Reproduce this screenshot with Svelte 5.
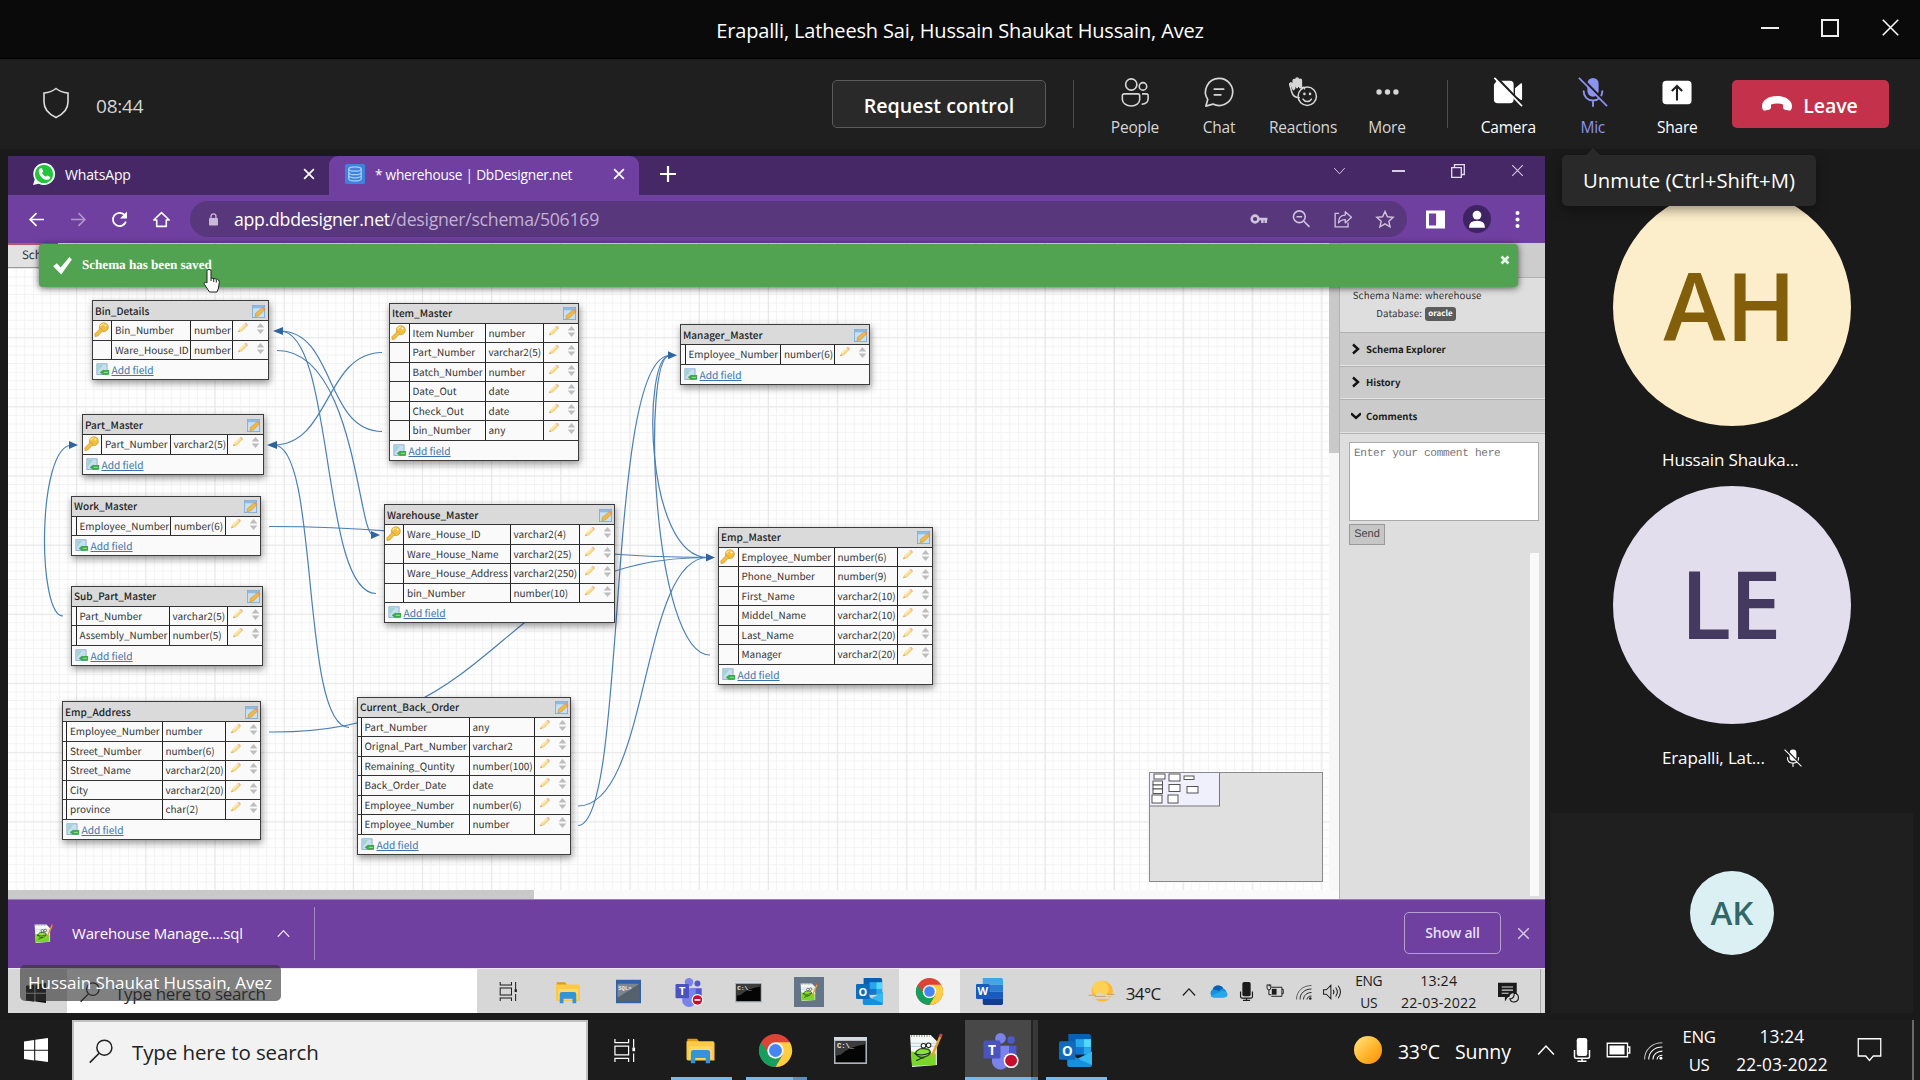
<script>
  const CX = 8;
  const CY = 243;

  const tables = [
    { name: 'Bin_Details', x: 92, y: 300, cols: [20, 79, 41.5, 36], rows: [['Bin_Number', 'number', 1], ['Ware_House_ID', 'number']] },
    { name: 'Part_Master', x: 82, y: 414, cols: [20, 68.5, 57.5, 35.5], rows: [['Part_Number', 'varchar2(5)', 1]] },
    { name: 'Work_Master', x: 71, y: 495.5, cols: [5.5, 94.5, 54.5, 35], rows: [['Employee_Number', 'number(6)']] },
    { name: 'Sub_Part_Master', x: 71, y: 585.5, cols: [5.5, 93, 58, 35.5], rows: [['Part_Number', 'varchar2(5)'], ['Assembly_Number', 'number(5)']] },
    { name: 'Emp_Address', x: 62, y: 701, cols: [5, 95.5, 63, 35.5], rows: [['Employee_Number', 'number'], ['Street_Number', 'number(6)'], ['Street_Name', 'varchar2(20)'], ['City', 'varchar2(20)'], ['province', 'char(2)']] },
    { name: 'Item_Master', x: 389, y: 302.5, cols: [20.5, 76, 58, 35.5], rows: [['Item Number', 'number', 1], ['Part_Number', 'varchar2(5)'], ['Batch_Number', 'number'], ['Date_Out', 'date'], ['Check_Out', 'date'], ['bin_Number', 'any']] },
    { name: 'Warehouse_Master', x: 384, y: 504, cols: [20, 106.5, 69, 35.5], rows: [['Ware_House_ID', 'varchar2(4)', 1], ['Ware_House_Name', 'varchar2(25)'], ['Ware_House_Address', 'varchar2(250)'], ['bin_Number', 'number(10)']] },
    { name: 'Manager_Master', x: 680, y: 324, cols: [5.5, 95.5, 54, 35], rows: [['Employee_Number', 'number(6)']] },
    { name: 'Emp_Master', x: 718, y: 526.5, cols: [20.5, 96, 63, 35.5], rows: [['Employee_Number', 'number(6)', 1], ['Phone_Number', 'number(9)'], ['First_Name', 'varchar2(10)'], ['Middel_Name', 'varchar2(10)'], ['Last_Name', 'varchar2(20)'], ['Manager', 'varchar2(20)']] },
    { name: 'Current_Back_Order', x: 357, y: 696.5, cols: [4.5, 108, 65, 36.5], rows: [['Part_Number', 'any'], ['Orignal_Part_Number', 'varchar2'], ['Remaining_Quntity', 'number(100)'], ['Back_Order_Date', 'date'], ['Employee_Number', 'number(6)'], ['Employee_Number', 'number']] }
  ];

  const links = [
    'M280 331C335 331 320 593 376 593.5',
    'M280 331C335 331 325 431 382 431.5',
    'M277 350.5C355 350 358 535 373 535',
    'M274 445C330 445 325 353 382 352.5',
    'M274 445C320 445 300 727 349 727.5',
    'M72 445C37 445 37 616 63 616',
    'M269 526.5C450 526 530 557 708 557.5',
    'M269 732C510 734 490 557 708 557.5',
    'M578 825.5C628 825 605 355 670 355.5',
    'M670 355.5C642 355 644 557 708 557.5',
    'M670 355.5C641 355 652 655 710 655',
    'M578 806C650 806 640 557 708 557.5'
  ];

  const arrows = [
    'M273 331l10-4v8z', 'M267 445l10-4v8z', 'M78 445l-9-4v8z',
    'M380 535l-9-4v8z', 'M677 355.3l-9-4v8z', 'M715 557.5l-9-4v8z'
  ];

  const mini = [
    [5, 2, 11, 5], [20, 2, 11, 7], [35, 4, 10, 3.5], [4, 9, 9.5, 4], [4, 13, 9.5, 4],
    [4, 17, 9.5, 4.5], [20, 12.5, 11, 7], [38, 14.5, 11, 6.5], [3, 23, 10, 8], [19, 23, 10, 8]
  ];

  const meetingTools = ['People', 'Chat', 'Reactions', 'More'];
  const deviceTools = ['Camera', 'Mic', 'Share'];
  const innerApps = ['taskview', 'explorer', 'sql', 'teams', 'cmd', 'npp', 'outlook', 'chrome', 'word'];
  const apps = ['taskview', 'explorer', 'chrome', 'cmd', 'npp', 'teams', 'outlook'];
</script>

{#snippet icon(name, cls = '')}
  <svg class="ic {name} {cls}" viewBox="0 0 32 32" fill="none">
    {#if name === 'People'}
      <g stroke="currentColor" stroke-width="1.7">
        <circle cx="12" cy="8" r="6" /><circle cx="24.5" cy="10" r="4" />
        <path d="M4.5 18h14.5a2 2 0 0 1 2 2v4c0 4-4 7-9 7s-9.500-3-9.500-7v-4a2 2 0 0 1 2-2zM23.500 18h4.500a2 2 0 0 1 2 2v3c0 4-3 6-7 6" />
      </g>
    {:else if name === 'Chat'}
      <path d="M16 1.500a14.500 14.500 0 1 1-6.500 27.400L2 31l2-7A14.500 14.500 0 0 1 16 1.500zM11 13h10M11 19h7" stroke="currentColor" stroke-width="1.8" stroke-linejoin="round" stroke-linecap="round" />
    {:else if name === 'Reactions'}
      <g stroke="currentColor" stroke-width="1.600" stroke-linecap="round" stroke-linejoin="round">
        <path d="M12 22c-4 0-7-2-8-6L1.800 8c-.3-1.600 1.800-2 2.300-.6L5.500 12V4c0-1.800 2.300-1.800 2.500 0l.4 6V2.500c0-1.800 2.600-1.800 2.600 0L11.300 10l.5-6.500c.2-1.700 2.500-1.500 2.500.2V13l1.200-1.500c1-1.300 2.700-.2 2.100 1.100" />
        <path d="M3 7l3 6M6.700 4v8M9.600 3v8M12.900 3.500V11" stroke-width="2.400" />
        <circle cx="20.500" cy="20.500" r="9.800" /><path d="M16 23.500c2 3.500 7 3.500 9 0" />
      </g>
      <circle cx="17.500" cy="18" r="1.400" fill="currentColor" /><circle cx="23.500" cy="18" r="1.400" fill="currentColor" />
    {:else if name === 'More'}
      <g fill="currentColor"><circle cx="6" cy="16" r="3.200" /><circle cx="16" cy="16" r="3.200" /><circle cx="26" cy="16" r="3.200" /></g>
    {:else if name === 'Camera'}
      <path d="M4 4h14a4 4 0 0 1 4 4v16a4 4 0 0 1-4 4H5a4 4 0 0 1-4-4V8zM23.500 12l6-5c.8-.6 1.500-.3 1.500.6v16c0 1-.7 1.300-1.500.7l-6-4z" fill="currentColor" />
      <path d="M3 0l29 30" stroke="#1f1f1f" stroke-width="3" /><path d="M1.500 1L31 31" stroke="currentColor" stroke-width="1.800" />
    {:else if name === 'Mic'}
      <rect x="10" y="1" width="12" height="20" rx="6" fill="currentColor" />
      <path d="M6 15c0 6 4 10 10 10s10-4 10-10M16 25v6" stroke="currentColor" stroke-width="2" stroke-linecap="round" />
      <path d="M3 0l29 30" stroke="#1f1f1f" stroke-width="2.500" /><path d="M1 1l30 30" stroke="currentColor" stroke-width="1.800" />
    {:else if name === 'Share'}
      <rect x="0.500" y="4" width="31" height="25" rx="4" fill="currentColor" /><path d="M16 25V10M10.500 15L16 9.500l5.500 5.500" stroke="#1f1f1f" stroke-width="2.200" />
    {:else if name === 'taskview'}
      <path d="M2 0v5h19V0M2 32v-5h19v5M2 10h19v12H2zM28 0v12M28 20v12" stroke="currentColor" stroke-width="1.700" /><rect x="26.300" y="12" width="3.700" height="5" fill="currentColor" />
    {:else if name === 'explorer'}
      <path d="M1 3h11l3 4H1z" fill="#e09c0b" /><path d="M0 6h30a2 2 0 0 1 2 2v20H2a2 2 0 0 1-2-2z" fill="#fdc947" /><path d="M3 12h26v14H3z" fill="#ffd968" /><path d="M5 19q0-3 3-3h16q3 0 3 3v12h-5v-6H10v6H5z" fill="#3593d8" />
    {:else if name === 'chrome'}
      <circle cx="16" cy="16" r="16" fill="#db4437" /><path d="M2.100 8A16 16 0 0 0 16 32l7-12-7 1.500-7-3.500z" fill="#159f5c" /><path d="M29.900 8A16 16 0 0 1 16 32l7-12-1-8-6-4z" fill="#ffcd41" /><circle cx="16" cy="16" r="8" fill="#f4f4f4" /><circle cx="16" cy="16" r="6.200" fill="#4686f4" />
    {:else if name === 'cmd'}
      <path d="M0 3h32v26H0z" fill="#aeb4bb" /><path d="M0 3h32v3H0z" fill="#d4dae2" /><path d="M1.500 7h29v20.500h-29z" fill="#050505" /><path d="M1.500 7h29v3q-15 2-24 10l-5 1z" fill="#3c3c3c" /><text class="term" x="2.800" y="14">C:\_</text>
    {:else if name === 'npp'}
      <path d="M1 1h20l6 6v23L3 32z" fill="#f4f7f2" /><path d="M2 9h24M2 12h24" stroke="#b8d0e8" /><path d="M2 17l24 2v11L3 31z" fill="#7bd62b" /><path d="M8 21c-4-3 1-7 6-7l5 1c3 2 1 6-3 7s-5 1-8-1z" fill="#8be03c" stroke="#244f12" stroke-width="1.300" /><circle cx="14" cy="11.500" r="2.200" fill="#fff" stroke="#222" /><circle cx="19" cy="11" r="2.200" fill="#fff" stroke="#222" /><path d="M5 19q8 3 16-1M7 26q5-3 8-3" stroke="#222" /><path d="M31 1l-9 21" stroke="#e8a02b" stroke-width="2.400" /><path d="M30.200 3l1.300-3" stroke="#c44" stroke-width="2.600" /><path d="M2 2h18" stroke="#777" stroke-width="1.500" stroke-dasharray="1 1.500" />
    {:else if name === 'teams'}
      <circle cx="16" cy="5" r="5" fill="#7b83eb" /><circle cx="26" cy="6.500" r="3.500" fill="#5059c9" /><path d="M19 12h12v9a6 6 0 0 1-9 5z" fill="#5059c9" /><path d="M8 12h16v12a8 8 0 0 1-16 4z" fill="#7b83eb" /><rect y="7" width="16" height="17" rx="1.500" fill="#4b53bc" /><text class="letter" x="8" y="20.500">T</text>
      <circle cx="26" cy="26" r="7" fill="#fff" /><circle cx="26" cy="26" r="5.600" fill="#c50f2f" />
      {#if cls === 'small'}<path d="M22.500 26h7" stroke="#fff" stroke-width="2" />{/if}
    {:else if name === 'outlook'}
      <path d="M9 0h20a2 2 0 0 1 2 2v17H9z" fill="#0a5fb0" /><path d="M16 5h8v8h-8z" fill="#28a8ea" /><path d="M24 5h7v8h-7z" fill="#50d9ff" /><path d="M16 13h8v7h-8z" fill="#0f78d4" /><path d="M24 13h7v7h-7z" fill="#28a8ea" /><path d="M8 17l12 8 12-8v13a2 2 0 0 1-2 2H10a2 2 0 0 1-2-2z" fill="#1490df" /><path d="M32 17v13L18 24z" fill="#35b8f1" /><rect y="7" width="16" height="18" rx="1.500" fill="#0f6cbd" /><text class="letter" x="8" y="21">O</text>
    {:else if name === 'word'}
      <path d="M8 0h22a2 2 0 0 1 2 2v6H8z" fill="#41a5ee" /><path d="M8 8h24v8H8z" fill="#2b7cd3" /><path d="M8 16h24v8H8z" fill="#185abd" /><path d="M8 24h24v6a2 2 0 0 1-2 2H10a2 2 0 0 1-2-2z" fill="#103f91" /><rect y="7" width="16" height="18" rx="1.500" fill="#185abd" /><text class="letter" x="8" y="20.500">W</text>
    {:else if name === 'sql'}
      <rect x="0" y="1" width="32" height="30" fill="#2f62a8" /><rect x="2" y="6" width="28" height="23" fill="#56616e" /><path d="M2 6h28L2 24z" fill="#7c8590" /><text class="term" x="3" y="14">SQL&gt;</text>
    {:else if name === 'winlogo'}
      <path d="M0 4.500l13.500-2v13H0zM15 2.300L32 0v15.500H15zM0 17h13.500v13L0 28zM15 17h17v15l-17-2.300z" fill="currentColor" />
    {:else if name === 'search'}
      <circle cx="20.500" cy="11.500" r="10" stroke="currentColor" stroke-width="2" /><path d="M13.500 19L1 31.500" stroke="currentColor" stroke-width="2.200" />
    {:else if name === 'wifi'}
      <g stroke="currentColor" stroke-width="1.800"><path d="M1 31C1 14 14 3 31 3" opacity=".7" /><path d="M8 31c0-13 10-21 23-21M15 31c0-8 7-14 16-14M22 31c0-4 4-7 9-7" /></g><circle cx="28.500" cy="29" r="2.500" fill="currentColor" />
    {:else if name === 'volume'}
      <path d="M1 12h5l8-8v24l-8-8H1zM18 12q3 4 0 8M22.500 8q6 8 0 16M27 5q8 11 0 22" stroke="currentColor" stroke-width="1.800" />
    {:else if name === 'smic'}
      <rect x="9" y="0" width="14" height="24" rx="3" fill="currentColor" /><path d="M6 16v9q0 2 2 2h16q2 0 2-2v-9M16 27v4M10 31h12" stroke="currentColor" stroke-width="2" />
    {:else if name === 'battery'}
      <path d="M1 7h27v18H1zM28 12h3v8h-3" stroke="currentColor" stroke-width="1.800" /><path d="M4 10h20v12H4z" fill="currentColor" />
    {:else if name === 'plug'}
      <path d="M9 8h20v17H9M29 12h2.500v8H29M1 3v6q0 4 3.500 4T8 9V3M3 2v4M6 2v4M4.500 13v9H9" stroke="currentColor" stroke-width="1.800" /><path d="M10 11h9v11h-9z" fill="currentColor" />
    {:else if name === 'onedrive'}
      <path d="M8 26a8 8 0 0 1-1-14A10 10 0 0 1 25 11a8 8 0 0 1 0 15z" fill="#1490df" /><path d="M7 12A10 10 0 0 1 25 11q-5 0-7 4z" fill="#0a5fb8" /><path d="M3 24l20-9q9 0 9 6 0 5-6 5H8z" fill="#28a8ea" />
    {:else if name === 'chev-up'}
      <path d="M2 24L16 9l14 15" stroke="currentColor" stroke-width="2.800" />
    {:else if name === 'chev-down'}
      <path d="M3 10l13 14 13-14" stroke="currentColor" stroke-width="2.400" />
    {:else if name === 'close'}
      <path class="x" d="M3 3l26 26M29 3L3 29" stroke="currentColor" stroke-width="2.600" />
    {:else if name === 'note'}
      <path d="M1 1h30v23H21l-5 6-5-6H1z" stroke="currentColor" stroke-width="1.700" />
    {:else if name === 'note-fill'}
      <path d="M0 1h30v23H16l-5 7v-7H0z" fill="currentColor" /><path d="M6 8h18M6 13h18M6 18h11" stroke="#d7d7d7" stroke-width="1.800" /><circle cx="25" cy="25" r="7" fill="#d7d7d7" /><path d="M26 18a7 7 0 1 1-7 9q7 0 7-9z" stroke="currentColor" stroke-width="1.800" />
    {:else if name === 'back'}
      <path d="M30 16H4M16 4L4 16l12 12" stroke="currentColor" stroke-width="3.200" />
    {:else if name === 'forward'}
      <path d="M2 16h26M16 4l12 12-12 12" stroke="currentColor" stroke-width="3" />
    {:else if name === 'reload'}
      <path d="M28 20A12.500 12.500 0 1 1 25 7l4 5" stroke="currentColor" stroke-width="3.400" /><path d="M30 1v13H17z" fill="currentColor" />
    {:else if name === 'home'}
      <path d="M1.500 17L16 3l14.500 14H25v12H7V17z" stroke="currentColor" stroke-width="3" stroke-linejoin="round" />
    {:else if name === 'lock'}
      <rect x="5" y="12" width="22" height="19" rx="2" fill="currentColor" /><path d="M10 13V8a6 6 0 0 1 12 0v5" stroke="currentColor" stroke-width="3.200" />
    {:else if name === 'key'}
      <circle cx="9" cy="16" r="6" stroke="currentColor" stroke-width="4.500" /><path d="M15 16h16M22 16v7M28 16v7" stroke="currentColor" stroke-width="4.500" />
    {:else if name === 'zoom'}
      <circle cx="13" cy="12" r="10.500" stroke="currentColor" stroke-width="2.800" /><path d="M21 20l10 10M8 12h10" stroke="currentColor" stroke-width="3" />
    {:else if name === 'share'}
      <path d="M9 6H2v24h23v-8" stroke="currentColor" stroke-width="2.400" /><path d="M8 23c0-9 5-14 12-14V3l11 10-11 10v-6q-8 0-12 6z" stroke="currentColor" stroke-width="2.300" stroke-linejoin="round" />
    {:else if name === 'star'}
      <path d="M16 2.500l4.300 9.500 10.200 1-7.700 6.800L25 30l-9-5.300L7 30l2.200-10.200L1.500 13l10.200-1z" stroke="currentColor" stroke-width="2.500" />
    {:else if name === 'panel'}
      <path d="M0 1h32v30H0zM5 6v20h12V6z" fill="currentColor" fill-rule="evenodd" />
    {:else if name === 'user'}
      <circle cx="16" cy="16" r="16" fill="#3f2463" /><circle cx="16" cy="11.500" r="5" fill="#fff" /><path d="M7 25q0-7 9-7t9 7v1H7z" fill="#fff" />
    {:else if name === 'dots'}
      <g fill="currentColor"><circle cx="16" cy="5" r="3.400" /><circle cx="16" cy="16" r="3.400" /><circle cx="16" cy="27" r="3.400" /></g>
    {:else if name === 'whatsapp'}
      <path d="M16 0a16 16 0 1 1-7.500 30L0 32l2.500-8A16 16 0 0 1 16 0z" fill="#f2fff5" /><circle cx="16" cy="16" r="13.300" fill="#25c43f" /><path d="M10 8l3-.5 2 5-2 2q2 4 5.500 5.500l2.500-2 4 2.500q0 4-4.500 4C14 24.500 7 16 8.500 10z" fill="#fff" />
    {:else if name === 'db'}
      <rect width="32" height="32" rx="3" fill="#3f82dc" /><path d="M6 8v15q0 4 10 4t10-4V8M6 13q0 4 10 4t10-4M6 18q0 4 10 4t10-4" stroke="#a7cdfa" stroke-width="2" /><ellipse cx="16" cy="8" rx="10" ry="3.500" stroke="#a7cdfa" stroke-width="2" />
    {:else if name === 'suncloud'}
      <circle cx="17" cy="15" r="13" fill="#ffb92e" /><circle cx="15" cy="12" r="10" fill="#ffd056" /><path d="M0 20h9q5-6 10-1h13v2H21q8 0 5 3.500H4q0-3.500 4-3.500H0z" fill="#ded3c2" /><path d="M0 20h9M23 19h9M8 21.500h13" stroke="#b98c5c" stroke-width=".8" />
    {:else if name === 'pencil'}
      <path d="M3 27l3-9L22 3l7 6-16 16z" fill="#f4d687" /><path d="M20 5l3-3q5 1 6 6l-3 3z" fill="#efb8a6" /><path d="M6 18L21 5l3 2L9 21z" fill="#fcebb3" /><path d="M3 27l2-5 3 3z" fill="#b49b7b" />
    {:else if name === 'sort'}
      <path d="M16 0l11 13H5zM16 32L5 19h22z" fill="#bdbdbd" />
    {:else if name === 'goldkey'}
      <circle cx="21" cy="11" r="9.500" fill="#f4bf3d" stroke="#c98d1d" stroke-width="1.300" /><path d="M14 13l5 5L8 30l-6 1v-6z" fill="#f4bf3d" stroke="#c98d1d" stroke-width="1.300" /><circle cx="24.500" cy="7.500" r="2" fill="#fff" /><path d="M14 9q2-5 7-5" stroke="#ffe999" stroke-width="2.500" />
    {:else if name === 'edit'}
      <rect x="1" y="1" width="30" height="30" fill="#c7e0f4" stroke="#7aa8d1" stroke-width="2" /><path d="M2 2h28v6H2z" fill="#8fbbe2" /><path d="M7 29l2-9L25 7l6 5-15 15z" fill="#f3b843" stroke="#b8802a" /><path d="M25 7l4-2 4 4-2 3z" fill="#e88f73" />
    {:else if name === 'add'}
      <rect x="1" y="2" width="25" height="26" fill="#c9def1" stroke="#7ba4ce" stroke-width="2" /><path d="M4 5h12L4 20z" fill="#9cd6cc" /><path d="M16 17h15v12H16zM8 23l9-7v14z" fill="#39ab48" /><path d="M18 23h10" stroke="#b4eabb" stroke-width="2" />
    {:else if name === 'check'}
      <path d="M1 18l6-5 6 7L27 3l4 4-17 24z" fill="#fff" />
    {:else if name === 'shield'}
      <path d="M16 1.500q5 4 12 4.500v9q0 10-12 15.500Q4 25 4 15V6q7-.5 12-4.500z" stroke="currentColor" stroke-width="1.600" />
    {/if}
  </svg>
{/snippet}

<div class="desktop">
  <header class="titlebar">
    <span class="title">Erapalli, Latheesh Sai, Hussain Shaukat Hussain, Avez</span>
    <div class="win"><i class="min"></i><i class="max"></i>{@render icon('close')}</div>
  </header>

  <div class="meetbar">
    {@render icon('shield')}
    <span class="timer">08:44</span>
    <button class="request">Request control</button>
    <i class="rule"></i>
    <nav class="tools">
      {#each meetingTools as t}<div class="tool">{@render icon(t)}<span>{t}</span></div>{/each}
    </nav>
    <i class="rule"></i>
    <nav class="tools bright">
      {#each deviceTools as t}<div class="tool" class:active={t === 'Mic'}>{@render icon(t)}<span>{t}</span></div>{/each}
    </nav>
    <button class="leave">
      <svg class="phone" viewBox="0 0 30 16"><path d="M15 0c8 0 15 4 15 10 0 3-1 5-3 4.600l-4-.8c-1.500-.3-2-1.500-2-3V8.500q-6-2-12 0v2.300c0 1.500-.5 2.700-2 3l-4 .8C1 15 0 13 0 10 0 4 7 0 15 0z" fill="#fff" /></svg>
      <span>Leave</span>
    </button>
  </div>

  <main class="stage">
    <section class="shared">
      <div class="tabs">
        <div class="tab">{@render icon('whatsapp')}<span>WhatsApp</span>{@render icon('close')}</div>
        <div class="tab on">{@render icon('db')}<span>* wherehouse | DbDesigner.net</span>{@render icon('close')}</div>
        <svg class="plus" viewBox="0 0 16 16"><path d="M8 0v16M0 8h16" stroke="#fff" stroke-width="2.200" /></svg>
        <div class="tabwin">
          {@render icon('chev-down')}<i class="min"></i>
          <svg class="restore" viewBox="0 0 14 14"><path d="M.7 3.700h9.600v9.600H.7zM3.500 3.500V.7h9.800v9.800h-2.800" fill="none" stroke="#e8e0f0" stroke-width="1.300" /></svg>
          {@render icon('close')}
        </div>
      </div>
      <div class="addr">
        <div class="navs">{@render icon('back')}{@render icon('forward')}{@render icon('reload')}{@render icon('home')}</div>
        <div class="url">
          {@render icon('lock')}<span class="host">app.dbdesigner.net<em>/designer/schema/506169</em></span>
          <div class="urlacts">{@render icon('key')}{@render icon('zoom')}{@render icon('share')}{@render icon('star')}</div>
        </div>
        <div class="ext">{@render icon('panel')}{@render icon('user')}{@render icon('dots')}</div>
      </div>

      <div class="page">
        <div class="work">
          <div class="canvas">
            <div class="apptab">Sch</div>
            <svg class="links" viewBox="8 243 1321 647" width="1321" height="647">
              <g fill="none" stroke="#4a7fb5" stroke-width="1.200">{#each links as d}<path {d} />{/each}</g>
              <g fill="#2f649e">{#each arrows as d}<path {d} />{/each}</g>
            </svg>
            {#each tables as t}
              <div class="table" style="left:{t.x - CX}px;top:{t.y - CY}px">
                <div class="thead"><span>{t.name}</span>{@render icon('edit')}</div>
                {#each t.rows as r}
                  <div class="row" style="grid-template-columns:{t.cols.map((c) => c + 'px').join(' ')}">
                    <span class="cell k">{#if r[2]}{@render icon('goldkey')}{/if}</span>
                    <span class="cell">{r[0]}</span>
                    <span class="cell">{r[1]}</span>
                    <span class="acts">{@render icon('pencil')}{@render icon('sort')}</span>
                  </div>
                {/each}
                <div class="tfoot">{@render icon('add')}<u>Add field</u></div>
              </div>
            {/each}
            <div class="minimap">
              <svg viewBox="0 0 174 110" width="174" height="110">
                <rect x=".5" y=".5" width="70" height="33.500" fill="#f0effc" stroke="#777" />
                {#each mini as [x, y, w, h]}<rect {x} {y} width={w} height={h} fill="#fff" stroke="#444" stroke-width=".9" />{/each}
              </svg>
            </div>
          </div>
          <div class="vscroll"><i></i></div>
          <div class="hscroll"><i></i></div>
        </div>
        <aside class="side">
          <div class="sidetop"></div>
          <div class="info">
            <div class="kv"><span>Schema Name:</span><b>wherehouse</b></div>
            <div class="kv"><span>Database:</span><b class="badge">oracle</b></div>
          </div>
          <div class="sec"><svg viewBox="0 0 10 12"><path d="M2 1.500L7 6l-5 4.500" /></svg>Schema Explorer</div>
          <div class="sec"><svg viewBox="0 0 10 12"><path d="M2 1.500L7 6l-5 4.500" /></svg>History</div>
          <div class="sec"><svg viewBox="0 0 10 12"><path d="M0 3.500L5 8l5-4.500" /></svg>Comments</div>
          <div class="comments">
            <div class="area">Enter your comment here</div>
            <div class="send">Send</div>
            <div class="track"></div>
          </div>
        </aside>
        <div class="toast">
          {@render icon('check')}<span>Schema has been saved</span>
          <svg class="x" viewBox="0 0 10 10"><path d="M1.500 1.500l7 7M8.500 1.500l-7 7" stroke="#e8f6e8" stroke-width="2.800" /></svg>
        </div>
        <svg class="hand" viewBox="0 0 18 25"><path d="M6 1.500c1.600 0 2 1 2 2V10l5 1c2 .4 3.500 1.200 3.300 3.200L15.500 20 14 24H6.500L1.500 16.500c-1-1.700.8-3 2.200-1.700L4 15V3.500c0-1 .5-2 2-2z" fill="#fff" stroke="#222" /><path d="M8 10v3M10.700 11v3M13.300 12v2.500" stroke="#222" /></svg>
      </div>

      <div class="downloads">
        {@render icon('npp')}<span>Warehouse Manage....sql</span>{@render icon('chev-up')}<i></i>
        <button class="showall">Show all</button>{@render icon('close')}
      </div>

      <div class="innerbar">
        <div class="istart">{@render icon('winlogo')}</div>
        <div class="isearch">{@render icon('search')}<span>Type here to search</span></div>
        <div class="iapps">{#each innerApps as a}<div class="iapp" class:lit={a === 'chrome'} class:tile={a === 'npp'}>{@render icon(a, 'small')}</div>{/each}</div>
        <div class="itray">
          {@render icon('suncloud')}<span class="temp">34°C</span>
          {@render icon('chev-up')}{@render icon('onedrive')}{@render icon('smic')}{@render icon('plug')}{@render icon('wifi')}{@render icon('volume')}
          <span class="two lang">ENG<br />US</span><span class="two date">13:24<br />22-03-2022</span>
          {@render icon('note-fill')}
        </div>
        <i class="ipeek"></i>
      </div>
      <div class="presenter">Hussain Shaukat Hussain, Avez</div>
    </section>

    <aside class="people">
      <div class="avatar ah">AH</div>
      <div class="pname">Hussain Shauka...</div>
      <div class="avatar le">LE</div>
      <div class="pname muted"><span>Erapalli, Lat...</span>{@render icon('Mic')}</div>
      <div class="selftile"><div class="avatar ak">AK</div></div>
    </aside>
    <div class="tip">Unmute (Ctrl+Shift+M)</div>
  </main>

  <footer class="taskbar">
    <div class="start">{@render icon('winlogo')}</div>
    <div class="tsearch">{@render icon('search')}<span>Type here to search</span></div>
    <div class="apps">{#each apps as a}<div class="app {a}-cell" class:run={['explorer', 'chrome', 'teams', 'outlook'].includes(a)}>{@render icon(a)}</div>{/each}</div>
    <div class="tray">
      <i class="sun"></i><span class="temp">33°C</span><span class="cond">Sunny</span>
      {@render icon('chev-up')}{@render icon('smic')}{@render icon('battery')}{@render icon('wifi')}
      <span class="two lang">ENG<br />US</span><span class="two date">13:24<br />22-03-2022</span>
      {@render icon('note')}<i class="peek"></i>
    </div>
  </footer>
</div>

<style>
  :global(body) { background: #1a1a1a; overflow: hidden; }
  .desktop { width: 1920px; height: 1080px; display: flex; flex-direction: column; background: #1a1a1a; font-family: "Open Sans", "Noto Sans", sans-serif; color: #fff; overflow: hidden; white-space: nowrap; }
  .desktop :global(*) { box-sizing: border-box; }
  .ic { display: block; flex: none; overflow: visible; width: 24px; height: 24px; }
  button { font-family: inherit; padding: 0; margin: 0; color: #fff; }
  .term { font: bold 7px "Liberation Mono", monospace; fill: #eee; }
  .letter { font: bold 13px "Open Sans", sans-serif; fill: #fff; text-anchor: middle; }

  .titlebar { flex: none; height: 59px; background: #0a0a0a; border-bottom: 1px solid #000; display: grid; grid-template-columns: 1fr auto 1fr; align-items: center; }
  .title { grid-column: 2; font-size: 20px; letter-spacing: -0.15px; padding-top: 3px; }
  .win { display: flex; justify-content: flex-end; align-items: center; gap: 42px; padding: 0 20px 3px 0; }
  .win .min { width: 18px; height: 2px; background: #eee; }
  .win .max { width: 18px; height: 18px; border: 2px solid #eee; }
  .win .ic { width: 19px; height: 19px; }

  .meetbar { flex: none; height: 90px; background: #1f1f1f; display: flex; align-items: center; }
  .shield { width: 32px; height: 32px; margin-left: 40px; margin-top: -2px; color: #ddd; }
  .timer { width: 736px; padding-left: 24px; font-size: 19px; letter-spacing: -0.2px; color: #d6d6d6; padding-top: 3px; margin-right: 24px; }
  .request { width: 214px; height: 48px; border: 1px solid #5a5a5a; border-radius: 5px; background: #292929; font-size: 19.700px; font-weight: 600; letter-spacing: 0; padding-top: 2px; }
  .rule { width: 1px; height: 48px; background: #4c4c4c; margin-left: 27px; }
  .tools { display: flex; margin-left: 19px; padding-top: 6px; color: #d6d6d6; }
  .bright { margin-left: 18px; color: #fff; }
  .rule + .tools + .rule { margin-left: 18px; }
  .tool { width: 84px; display: flex; flex-direction: column; align-items: center; font-size: 15.500px; letter-spacing: -0.2px; }
  .bright .tool { width: 84.500px; }
  .tool .ic { width: 30px; height: 30px; }
  .tool span { line-height: 22px; margin-top: 9px; }
  .tool .More { width: 27px; }
  .active { color: #8d93f0; }
  .leave { margin-left: 12px; width: 157px; height: 48px; border: 0; border-radius: 5px; background: #c4314b; display: flex; align-items: center; justify-content: center; gap: 11px; font-size: 19.500px; font-weight: 600; letter-spacing: -0.1px; }
  .phone { width: 30px; height: 16px; }
  .leave span { padding-top: 2px; }

  .stage { flex: none; height: 871px; display: flex; padding: 7px 7px 7px 8px; gap: 6px; position: relative; }
  .shared { width: 1537px; height: 857px; display: flex; flex-direction: column; position: relative; overflow: hidden; }
  .tabs { flex: none; height: 39px; background: #452865; display: flex; align-items: center; }
  .tab { height: 39px; display: flex; align-items: center; width: 321px; padding: 0 14px 3px 25px; font-size: 14px; letter-spacing: -0.15px; }
  .tab span { flex: 1; padding-left: 10px; }
  .tab .close { width: 12px; height: 12px; }
  .tab .x { stroke-width: 4.500; }
  .whatsapp { width: 22px; height: 22px; }
  .tab.on { width: 310px; background: #6f40a0; border-radius: 9px 9px 0 0; padding: 0 14px 3px 16px; font-size: 13.700px; letter-spacing: -0.25px; }
  .db { width: 20px; height: 20px; }
  .plus { width: 16px; height: 16px; margin-left: 21px; margin-bottom: 3px; }
  .tabwin { display: flex; align-items: center; margin-left: auto; padding: 0 21px 10px 0; gap: 46px; color: #d8cbe6; }
  .tabwin .ic { width: 13px; height: 13px; }
  .tabwin .min { width: 13px; height: 2px; background: #d8cbe6; }
  .restore { width: 14px; height: 14px; }
  .addr { flex: none; height: 48px; background: #6f40a0; display: flex; align-items: center; }
  .navs { display: flex; width: 182px; padding-left: 20px; gap: 24.500px; }
  .navs .ic { width: 17px; height: 17px; }
  .navs .forward { opacity: .45; }
  .url { width: 1217px; height: 36px; border-radius: 18px; background: #58377c; display: flex; align-items: center; padding: 0 13px 0 17px; }
  .lock { width: 13px; height: 15px; color: #c7bad6; }
  .host { font-size: 17.700px; padding-left: 14px; letter-spacing: -0.27px; }
  .host em { font-style: normal; color: #c2b0d6; }
  .urlacts { margin-left: auto; display: flex; gap: 24px; color: #cfc2dc; }
  .urlacts .ic { width: 18px; height: 18px; }
  .ext { display: flex; align-items: center; margin-left: 19px; gap: 18px; }
  .panel { width: 19px; height: 19px; }
  .user { width: 28px; height: 28px; }
  .dots { width: 19px; height: 19px; margin-left: -1px; }

  .page { flex: none; height: 656px; display: flex; position: relative; background: #fff; color: #333; font-family: "Noto Sans CJK SC", "Noto Sans", sans-serif; text-rendering: geometricPrecision; }
  .work { width: 1331px; display: grid; grid-template: 647px 9px / 1321px 10px; }
  .canvas {
    position: relative; overflow: hidden; background-color: #fefefe;
    background-image: linear-gradient(90deg, #e6e8e6 1px, transparent 1px), linear-gradient(#e6e8e6 1px, transparent 1px), linear-gradient(90deg, #f2f3f2 1px, transparent 1px), linear-gradient(#f2f3f2 1px, transparent 1px);
    background-size: 69.200px 69.200px, 69.200px 69.200px, 8.650px 8.650px, 8.650px 8.650px;
    background-position: -1px 25px, -1px 25px, -1px 25px, -1px 25px;
  }
  .apptab { width: 50px; height: 25px; border-top: 2px solid #c0526e; border-bottom: 1px solid #999; background: #e2e2e2; font-size: 11.500px; line-height: 21px; padding-left: 14px; }
  .links { position: absolute; left: 0; top: 0; }
  .table { position: absolute; border: 1.500px solid #3c3c3c; background: #fafafa; box-shadow: 1px 3px 7px rgba(0, 0, 0, .42); font-size: 9.950px; color: #333; }
  .thead { height: 19px; background: #dadada; display: flex; align-items: center; justify-content: space-between; padding: 0 2.500px 1px 2px; font-weight: 500; color: #222; font-size: 10.050px; }
  .thead .edit { position: relative; top: 1px; }
  .edit { width: 13px; height: 13px; }
  .row { display: grid; height: 19.550px; border-top: 1.500px solid #333; margin: 0 -1px 0 -1px; }
  .cell { border-right: 1px solid #222; padding-left: 3px; line-height: 18px; }
  .cell.k { padding: 1px 0 0 2px; }
  .goldkey { width: 15px; height: 15px; }
  .acts { display: flex; gap: 6px; padding: 1px 0 0 4px; }
  .pencil { width: 12px; height: 12px; }
  .sort { width: 11px; height: 11px; margin-top: 1px; }
  .tfoot { height: 20px; border-top: 1.500px solid #333; display: flex; align-items: center; padding-left: 3px; gap: 1.500px; color: #3d74ab; font-size: 10.200px; }
  .add { width: 14px; height: 13px; }
  .minimap { position: absolute; left: 1141px; top: 529px; width: 174px; height: 110px; background: rgba(222, 222, 222, .93); outline: 1px solid #8a8a8a; outline-offset: -1px; }
  .vscroll { background: #f7f7f7; }
  .vscroll i { display: block; height: 210px; background: #c9c9c9; }
  .hscroll { grid-column: 1 / 3; background: #fafafa; }
  .hscroll i { display: block; width: 526px; height: 9px; background: #c9c9c9; }
  .side { width: 206px; background: #dedede; border-left: 1.500px solid #b4b4b4; display: flex; flex-direction: column; }
  .sidetop { height: 35px; background: #cdcdcd; border-bottom: 1px solid #b2b2b2; }
  .info { height: 54px; padding: 9px 0 0 11px; font-size: 9.700px; }
  .kv { display: grid; grid-template-columns: 71px auto; justify-content: start; gap: 3px; height: 18px; line-height: 17px; letter-spacing: .1px; }
  .kv span { text-align: right; }
  .kv b { font-weight: 400; }
  .kv .badge { background: #5c5c5c; color: #fff; border-radius: 3px; width: 31px; height: 14px; line-height: 13px; font-size: 8px; font-weight: 700; text-align: center; margin-top: 2px; letter-spacing: 0; }
  .sec { height: 33.500px; background: #cbcbcb; border-top: 1px solid #b2b2b2; border-bottom: 1px solid #e4e4e4; display: flex; align-items: center; gap: 5px; padding-left: 11px; font-size: 9.600px; font-weight: 700; color: #1c1c1c; }
  .sec svg { width: 10px; height: 12px; fill: none; stroke: #111; stroke-width: 2.400; }
  .comments { flex: 1; border-top: 1px solid #b2b2b2; padding: 8px 6px 3px 9px; display: flex; flex-direction: column; }
  .area { height: 79px; background: #fff; border: 1px solid #aaa; font: 11.200px/14px "Liberation Mono", monospace; letter-spacing: -.35px; color: #777; padding: 4px 4px; }
  .send { margin-top: 3px; width: 36px; height: 21px; border: 1px solid #999; background: #c6c6c6; font: 11px/19px "Liberation Sans", sans-serif; text-align: center; color: #444; }
  .track { align-self: flex-end; width: 9px; flex: 1; margin-top: 8px; background: #f9f9f9; }
  .toast { position: absolute; left: 31px; top: 1px; width: 1479px; height: 43px; border-radius: 4px; background: #51a351; box-shadow: 0 1px 7px rgba(0, 0, 0, .65); display: flex; color: #fff; font: bold 13.200px "Liberation Serif", serif; padding: 11px 8px 0 13px; }
  .toast span { padding: 2px 0 0 9px; flex: 1; letter-spacing: -.05px; }
  .check { width: 21px; height: 20px; }
  .toast .x { width: 10px; height: 10px; }
  .hand { position: absolute; left: 195px; top: 25px; width: 18px; height: 25px; fill: none; }

  .downloads { flex: none; height: 69px; background: #6f40a0; border-top: 1px solid #9a7abd; display: flex; align-items: center; padding: 0 15px 2px 26px; font-size: 15px; }
  .downloads .npp { width: 19px; height: 19px; }
  .downloads span { width: 206px; padding-left: 19px; letter-spacing: -.2px; }
  .downloads .chev-up { width: 13px; height: 13px; margin-left: 18px; color: #efe8f6; }
  .downloads i { width: 1px; height: 53px; background: #a488c6; margin-left: 24px; }
  .showall { margin-left: auto; margin-right: 16px; width: 97px; height: 42px; border: 1.500px solid #b79fd3; border-radius: 5px; background: none; font-size: 14px; font-weight: 600; letter-spacing: -.2px; padding-bottom: 1px; color: #e9defa; }
  .downloads .close { width: 13px; height: 13px; color: #d6cbe2; }
  .downloads .x { stroke-width: 3.600; }

  .innerbar { flex: none; height: 45px; background: #d6d7d6; border-top: 1px solid #efe5f4; display: flex; color: #1b1b1b; }
  .istart { width: 59px; padding: 14px 0 0 18px; color: #111; }
  .istart .ic { width: 20px; height: 20px; }
  .isearch { width: 410px; background: #fff; display: flex; padding: 14px 0 0 13px; font-size: 17px; letter-spacing: -.3px; }
  .isearch .ic { width: 20px; height: 20px; margin-top: -1px; }
  .isearch span { padding-left: 15px; line-height: 22px; }
  .iapps { display: flex; padding-left: 1px; }
  .iapp { width: 60.200px; height: 45px; display: flex; align-items: center; justify-content: center; }
  .iapp .ic { width: 27px; height: 27px; }
  .iapp .taskview { width: 21px; height: 19px; }
  .iapp .explorer { height: 24px; width: 26px; }
  .iapp .sql { height: 25px; }
  .iapp .teams { width: 30px; height: 27px; }
  .iapp.lit { background: #f1f1f1; }
  .tile .ic { width: 18px; height: 18px; outline: 6px solid #647587; background: #647587; }
  .itray { display: flex; align-items: center; padding-left: 68px; height: 45px; }
  .suncloud { width: 27px; height: 26px; }
  .itray .temp { font-size: 17px; letter-spacing: -.6px; width: 55px; padding: 3px 0 0 11px; margin-right: 11px; }
  .itray .chev-up { width: 16px; height: 14px; margin-right: 11px; }
  .onedrive { width: 20px; height: 19px; margin-right: 9px; }
  .itray .smic { width: 19px; height: 19px; margin-right: 9px; }
  .plug { width: 20px; height: 17px; margin-right: 11px; }
  .itray .wifi { width: 16px; height: 16px; margin-right: 10px; }
  .volume { width: 20px; height: 18px; }
  .two { text-align: center; }
  .itray .two { font-size: 13.800px; line-height: 22px; letter-spacing: -.45px; padding-top: 1px; }
  .itray .lang { width: 50px; margin-left: 2px; }
  .itray .date { width: 84px; margin-left: 3px; font-size: 14.200px; letter-spacing: .15px; }
  .note-fill { width: 20px; height: 20px; margin-left: 17px; }
  .ipeek { width: 1px; margin-left: auto; margin-right: 4px; background: #a5a5a5; }
  .presenter { position: absolute; left: 12px; top: 809px; width: 261px; height: 36px; border-radius: 5px; background: rgba(50, 50, 50, .62); font-size: 17px; letter-spacing: -.04px; line-height: 36px; padding-left: 8px; }

  .people { width: 362px; display: flex; flex-direction: column; align-items: center; padding-top: 32px; }
  .avatar { flex: none; width: 238px; height: 238px; border-radius: 50%; display: flex; align-items: center; justify-content: center; font-size: 94px; font-weight: 600; letter-spacing: 0; line-height: 1; padding: 0 4px 4px 0; }
  .ah { background: #fdeecb; color: #835f0c; }
  .le { background: #e2deed; color: #443a5f; letter-spacing: -2px; }
  .ak { width: 84px; height: 84px; font-size: 33px; background: #dbf0f2; color: #316768; padding: 0 0 1px; }
  .pname { width: 140px; height: 60px; line-height: 68px; font-size: 17px; letter-spacing: -.15px; }
  .muted { display: flex; align-items: center; justify-content: space-between; height: 89px; line-height: 20px; padding-bottom: 21px; }
  .muted .ic { width: 18px; height: 18px; }
  .selftile { width: 362px; flex: 1; background: #1f1f1f; display: flex; align-items: center; justify-content: center; }
  .tip { position: absolute; left: 1562px; top: 6px; width: 254px; height: 51px; border-radius: 5px; background: #292929; font-size: 20.300px; line-height: 51px; text-align: center; letter-spacing: 0; box-shadow: 0 4px 12px rgba(0, 0, 0, .4); }
  .tip::before { content: ''; position: absolute; left: 24px; top: -7px; border: solid transparent; border-width: 0 7px 7px; border-bottom-color: #292929; }

  .taskbar { flex: none; height: 60px; background: #1c1c1c; display: flex; }
  .start { width: 72px; padding: 18px 0 0 24px; }
  .tsearch { width: 516px; background: #f2f2f2; border: 2px solid #c0c0c0; border-bottom: 0; display: flex; align-items: center; padding: 0 0 1px 15px; color: #222; font-size: 20.500px; letter-spacing: -.1px; }
  .tsearch span { padding: 2px 0 0 19px; }
  .apps { display: flex; }
  .app { width: 75px; height: 60px; display: flex; align-items: center; justify-content: center; position: relative; }
  .app .ic { width: 33px; height: 33px; }
  .app .taskview { width: 24px; height: 23px; margin-right: 2px; }
  .app .explorer { height: 28px; }
  .app .teams { width: 37px; height: 34px; }
  .run::after { content: ''; position: absolute; left: 8px; right: 6px; bottom: 0; height: 3px; background: #76b9ed; }
  .chrome-cell::after { background: linear-gradient(90deg, #76b9ed 47px, #5b8fbd 47px); }
  .teams-cell { background: linear-gradient(90deg, transparent 2px, #484848 2px, #484848 68px, #242424 68px, #242424 70px, #383838 70px); }
  .teams-cell::after { left: 2px; right: 0; background: linear-gradient(90deg, #76b9ed 66px, #5b8fbd 66px); }
  .tray { display: flex; align-items: center; flex: 1; padding-left: 241px; }
  .sun { width: 28px; height: 28px; border-radius: 50%; background: linear-gradient(135deg, #ffe680, #ffb52d 55%, #ff8c00); }
  .tray .temp, .tray .cond { font-size: 19.500px; letter-spacing: -.3px; padding-top: 3px; }
  .tray .temp { padding-left: 16px; width: 73px; }
  .tray .cond { width: 82px; letter-spacing: -.1px; }
  .tray .chev-up { width: 18px; height: 18px; margin-right: 15px; }
  .tray .smic { width: 24px; height: 24px; margin-right: 12px; }
  .tray .battery { width: 25px; height: 24px; margin-right: 13px; }
  .tray .wifi { width: 19px; height: 19px; }
  .tray .two { font-size: 16.800px; line-height: 28px; letter-spacing: -.45px; padding-top: 1px; }
  .tray .lang { width: 46px; margin-left: 13px; }
  .tray .date { width: 108px; margin-left: 6px; font-size: 17.300px; letter-spacing: .15px; }
  .note { width: 25px; height: 24px; margin-left: 21px; }
  .peek { width: 2px; height: 60px; background: #6a6a6a; margin-left: 30px; }
</style>
